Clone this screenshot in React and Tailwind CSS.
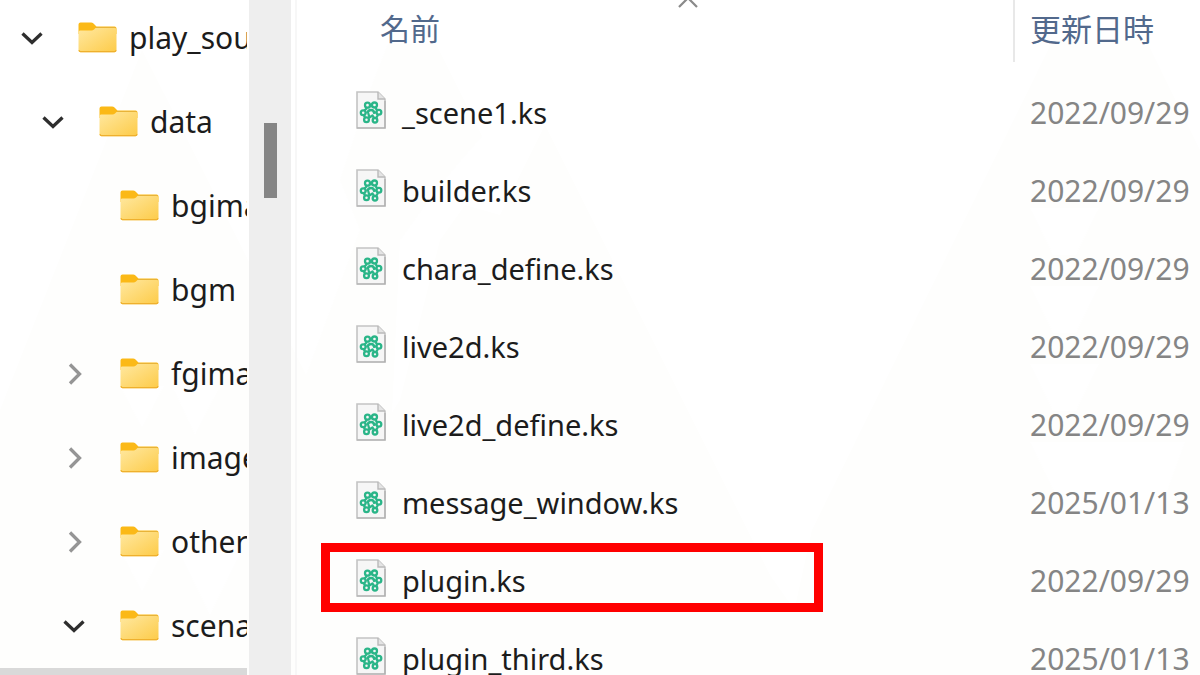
const tree = [
  { name: "play_sound", level: 0, state: "open" },
  { name: "data", level: 1, state: "open" },
  { name: "bgimage", level: 2, state: "none" },
  { name: "bgm", level: 2, state: "none" },
  { name: "fgimage", level: 2, state: "closed" },
  { name: "image", level: 2, state: "closed" },
  { name: "others", level: 2, state: "closed" },
  { name: "scenario", level: 2, state: "open" },
];

const files = [
  { name: "_scene1.ks", date: "2022/09/29" },
  { name: "builder.ks", date: "2022/09/29" },
  { name: "chara_define.ks", date: "2022/09/29" },
  { name: "live2d.ks", date: "2022/09/29" },
  { name: "live2d_define.ks", date: "2022/09/29" },
  { name: "message_window.ks", date: "2025/01/13" },
  { name: "plugin.ks", date: "2022/09/29", marked: true },
  { name: "plugin_third.ks", date: "2025/01/13" },
];

const indents = ["pl-[20px]", "pl-[41px]", "pl-[62px]"];

function Chevron({ state }) {
  if (state === "none") return <span className="w-6 shrink-0" />;
  const open = state === "open";
  return (
    <svg viewBox="0 0 24 24" className="size-6 shrink-0" fill="none" aria-hidden="true">
      <path
        d={open ? "M2.5 7.5 12 16.500l9.500-9" : "M8 2.500 17.500 12 8 21.500"}
        stroke={open ? "#2e2e2e" : "#959595"}
        strokeWidth="3.300"
      />
    </svg>
  );
}

function FolderIcon() {
  return (
    <svg viewBox="0 0 39 31" className="mb-0.5 h-[31px] w-[39px] shrink-0" aria-hidden="true">
      <defs>
        <linearGradient id="folder-face" x1="0" y1="0" x2="1" y2="1">
          <stop offset="0" stopColor="#ffe8a0" />
          <stop offset="1" stopColor="#fdcb48" />
        </linearGradient>
      </defs>
      <path d="M0.500 2.500Q0.500 0.500 2.500 0.500H13Q14.500 0.500 15.500 1.500L18.500 4.500H36.500Q38.500 4.500 38.500 6.500V12H0.500Z" fill="#fbb917" />
      <path d="M0.500 10Q0.500 8.500 2 8.500H13.500Q15 8.500 16 7.500L17.500 6H37Q38.500 6 38.500 7.500V28.500Q38.500 30.200 36.500 30.200H2.500Q0.500 30.200 0.500 28.500Z" fill="url(#folder-face)" />
      <path d="M1 28.200Q1.200 29.600 2.500 29.600H36.500Q37.800 29.600 38 28.200" fill="none" stroke="#efb02d" strokeWidth="1.200" />
      <path d="M18 5.500H37.500" stroke="#e8b338" strokeWidth="1" />
    </svg>
  );
}

function FileIcon() {
  return (
    <svg viewBox="0 0 30 38" className="mb-1.5 h-[38px] w-[30px] shrink-0" fill="none" aria-hidden="true">
      <path d="M1 1H22L29 8V37H1Z" fill="#f6f6f6" stroke="#c4c4c4" strokeWidth="1.600" />
      <path d="M22 1V8H29" fill="#e4e4e4" stroke="#b9b9b9" strokeWidth="1.400" />
      <path d="M1 37H29V10" stroke="#adadad" strokeWidth="1.200" />
      <g stroke="#2ab588" strokeWidth="2.300" strokeLinejoin="round">
        <circle cx="11.500" cy="14.200" r="2.500" />
        <circle cx="18.500" cy="14" r="2.500" />
        <circle cx="7.200" cy="21.700" r="2.400" />
        <circle cx="22.900" cy="21.200" r="2.400" />
        <circle cx="10.500" cy="28.800" r="2.400" />
        <circle cx="19" cy="29.300" r="2.300" />
        <path d="M11 17 8.500 19.500M19.500 17l1.500 2M8 24.500l1.200 2.500M22 24l-2 3.200M14 15h2.500M11 22.500q1-3.500 4-3.500t3 3l3-1M13.500 26.500l-1.500-5M13 26.800l3.500-2.300 1.700 2.700" />
      </g>
    </svg>
  );
}

function Backdrop() {
  return (
    <svg viewBox="0 0 1200 675" preserveAspectRatio="none" className="absolute inset-0 -z-10 size-full" aria-hidden="true">
      <g fill="#fefefd">
        <path d="M142 50 0 410V675H440V640Z" />
        <path d="M388 44H436L482 136 461 160 436 190 400 240 380 675H297V400L360 230 340 180 370 90Z" />
        <path d="M545 125 770 575 840 675H297V560L400 400 440 240 465 205 500 215Z" />
        <path d="M1053 40H1146L1200 150V675H780L812 530Z" />
      </g>
      <g fill="#ffffff">
        <path d="M142 428 120 386H164Z" />
        <path d="M195 435 174 390H218Z" />
        <path d="M142 592 120 550H164Z" />
        <path d="M210 615 178 550H242Z" />
        <path d="M1030 208 1053 255H1076L1099 208Z" />
        <path d="M1030 286 1053 333H1076L1099 286Z" />
        <path d="M1030 364 1053 411H1076L1099 364Z" />
        <path d="M1030 442 1058 500H1164L1185 442Z" />
      </g>
    </svg>
  );
}

export default function App() {
  return (
    <div className="relative isolate flex h-screen overflow-hidden bg-white font-['Noto_Sans','Noto_Sans_CJK_JP',sans-serif] text-[30px] leading-[40px] text-[#1c1c1c]">
      <Backdrop />

      <nav aria-label="フォルダー" className="flex w-[247px] shrink-0 flex-col justify-between overflow-hidden">
        <ul className="-mt-1">
          {tree.map((item) => (
            <li key={item.name}>
              <button
                type="button"
                className={`flex h-[84px] items-center whitespace-nowrap text-left ${indents[item.level]}`}
              >
                <Chevron state={item.state} />
                <span className="ml-[34px] flex items-center gap-3">
                  <FolderIcon />
                  <span>{item.name}</span>
                </span>
              </button>
            </li>
          ))}
        </ul>
        <div className="h-2 shrink-0 bg-[#d9d9d9]" />
      </nav>

      <div className="ml-0.5 flex w-[42px] shrink-0 justify-center bg-[#eeeeee] pt-[123px]">
        <div className="h-[75px] w-[13px] bg-[#858585]" />
      </div>

      <main className="relative ml-1 min-w-0 flex-1 border-l-2 border-[#f7f7f7]">
        <svg viewBox="0 0 20 10" className="absolute left-[381px] top-0 h-[10px] w-5" fill="none" aria-hidden="true">
          <path d="M1 7 10 -2 19 7" stroke="#8a8a8a" strokeWidth="2.200" />
        </svg>
        <table className="w-full table-fixed border-collapse text-left">
          <thead>
            <tr className="h-[74px] align-top text-[#52698c]">
              <th scope="col" className="p-0 pl-[83px] font-normal">
                <div className="flex h-[62px] items-center border-r-2 border-[#e8e8e8] pb-1">名前</div>
              </th>
              <th scope="col" className="w-[185px] p-0 pl-[15px] font-normal">
                <div className="flex h-[62px] items-center whitespace-nowrap pb-1 text-[31px]">更新日時</div>
              </th>
            </tr>
          </thead>
          <tbody>
            {files.map((file) => (
              <tr key={file.name} className="h-[78px]">
                <td className="relative p-0 pl-[59px]">
                  <div className="flex items-center gap-4 whitespace-nowrap text-[29px]">
                    <FileIcon />
                    <span>{file.name}</span>
                  </div>
                  {file.marked && (
                    <div className="absolute left-6 top-px h-[69px] w-[502px] border-[9px] border-[#ff0000]" />
                  )}
                </td>
                <td className="overflow-hidden whitespace-nowrap p-0 pl-[15px] text-[#858585]">{file.date}</td>
              </tr>
            ))}
          </tbody>
        </table>
      </main>
    </div>
  );
}
